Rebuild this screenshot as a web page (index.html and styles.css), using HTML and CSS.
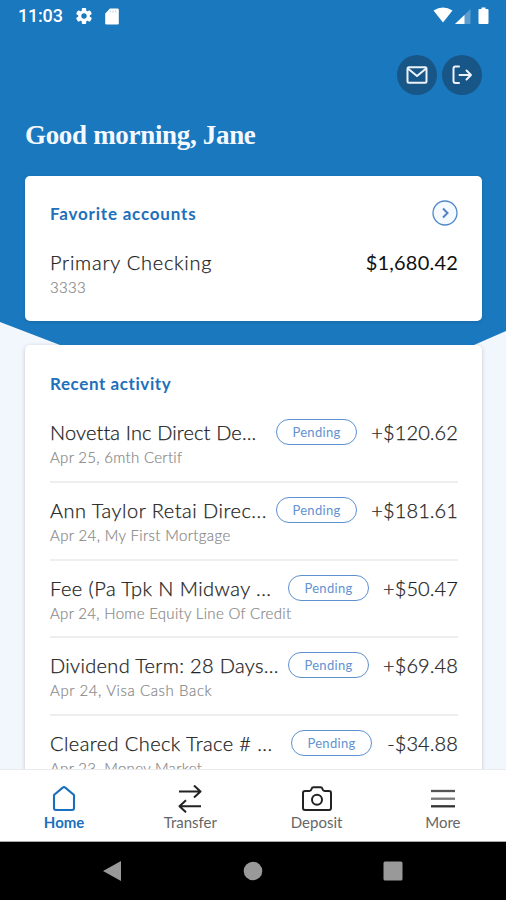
FILE: index.html
```html
<!DOCTYPE html>
<html lang="en">
<head>
<meta charset="utf-8">
<title>Accounts</title>
<link rel="stylesheet" href="styles.css">
</head>
<body>
<div class="phone">
  <main class="screen">
    <header class="hero">
      <div class="status">
        <span class="clock">11:03</span>
        <svg class="gear" width="16" height="16" viewBox="0 0 16 16"><g fill="#fff"><rect x="5.8" y="0" width="4.4" height="16" rx="1"/><rect x="5.8" y="0" width="4.4" height="16" rx="1" transform="rotate(60 8 8)"/><rect x="5.8" y="0" width="4.4" height="16" rx="1" transform="rotate(120 8 8)"/><circle cx="8" cy="8" r="5.8"/></g><circle cx="8" cy="8" r="2.7" fill="#1a78be"/></svg>
        <svg class="sd" width="14" height="17" viewBox="0 0 14 17"><path d="M5 .5h7.5q1.3 0 1.3 1.3v13.4q0 1.3-1.3 1.3h-11Q.2 16.500.2 15.200V5.500z" fill="#fff"/><path d="M5.300 2.500v2M8 2.500v2M10.700 2.500v2" stroke="#b5d2e8"/></svg>
        <svg class="signals" width="58" height="18" viewBox="0 0 58 18"><path d="M.5 3.500Q10 -2.500 19.500 3.500L10 15.500z" fill="#fff"/><path d="M22 17 37.500 2v15z" fill="#5b9dce"/><path d="M22 17 31.500 8v9z" fill="#fff"/><path d="M48.500.500h4v1.500h2q1 0 1 1v13q0 1-1 1h-8q-1 0-1-1V3q0-1 1-1h2z" fill="#fff"/></svg>
      </div>
      <div class="actions">
        <span class="round"><svg width="24" height="24" viewBox="0 0 24 24" fill="none" stroke="#eef2fa" stroke-width="2" stroke-linejoin="round" stroke-linecap="round"><rect x="2.500" y="4.200" width="19" height="15.600" rx="1.500"/><path d="M3.500 6l8.500 7 8.500-7"/></svg></span>
        <span class="round"><svg width="24" height="24" viewBox="0 0 24 24" fill="none" stroke="#eef2fa" stroke-width="2" stroke-linejoin="round" stroke-linecap="round"><path d="M9 3.500H5.500q-2 0-2 2v12.500q0 2 2 2H9M9.500 12H21M16.500 7.500 21 12l-4.500 4.500"/></svg></span>
      </div>
      <h1>Good morning, Jane</h1>
      <section class="card favorites">
        <div class="card-head"><h2 class="fav">Favorite accounts</h2>
          <svg width="26" height="26" viewBox="0 0 26 26" fill="none"><circle cx="13" cy="13" r="12" fill="#f4faff" stroke="#5088ca" stroke-width="1.300"/><path d="M11 8.500l4.500 4.500-4.500 4.500" stroke="#5480c4" stroke-width="2"/></svg>
        </div>
        <div class="line"><span class="name checking">Primary Checking</span><span class="total">$1,680.42</span></div>
        <div class="sub digits">3333</div>
      </section>
    </header>
    <section class="card activity">
      <h2 class="recent">Recent activity</h2>
      <div class="row"><div class="line"><span class="name n1">Novetta Inc Direct De...</span><span class="pill">Pending</span><span class="amount">+$120.62</span></div><div class="sub s1">Apr 25, 6mth Certif</div></div>
      <div class="row"><div class="line"><span class="name n2">Ann Taylor Retai Direc...</span><span class="pill">Pending</span><span class="amount">+$181.61</span></div><div class="sub s2">Apr 24, My First Mortgage</div></div>
      <div class="row"><div class="line"><span class="name n3">Fee (Pa Tpk N Midway ...</span><span class="pill">Pending</span><span class="amount short">+$50.47</span></div><div class="sub s3">Apr 24, Home Equity Line Of Credit</div></div>
      <div class="row"><div class="line"><span class="name n4">Dividend Term: 28 Days...</span><span class="pill">Pending</span><span class="amount short">+$69.48</span></div><div class="sub s4">Apr 24, Visa Cash Back</div></div>
      <div class="row"><div class="line"><span class="name n5">Cleared Check Trace # ...</span><span class="pill">Pending</span><span class="amount minus">-$34.88</span></div><div class="sub s5">Apr 23, Money Market</div></div>
    </section>
  </main>
  <nav class="tabs">
    <div class="tab active"><svg width="32" height="28" viewBox="0 0 32 28" fill="none" stroke="#1a70bd" stroke-width="2.100" stroke-linejoin="round"><path d="M6 10 14.700 2.600q1.300-1 2.600 0L26 10v13q0 2-2 2H8q-2 0-2-2z"/></svg><span>Home</span></div>
    <div class="tab"><svg width="32" height="28" viewBox="0 0 32 28" fill="none" stroke="#222" stroke-width="2" stroke-linejoin="round"><path d="M5 6.500h21M20 .500l6.500 6-6.500 6M27 21.300H6M12 15.300l-6.500 6 6.500 6"/></svg><span>Transfer</span></div>
    <div class="tab deposit"><svg width="32" height="28" viewBox="0 0 32 28" fill="none" stroke="#222" stroke-width="2" stroke-linejoin="round"><path d="M4 6h4.500q1.500 0 2-2 .5-1.700 2-1.700h7q1.500 0 2 1.700.5 2 2 2H28q2 0 2 2v15q0 2-2 2H4q-2 0-2-2V8q0-2 2-2z"/><circle cx="16" cy="14.700" r="5"/></svg><span>Deposit</span></div>
    <div class="tab more"><svg width="32" height="28" viewBox="0 0 32 28" fill="none" stroke-width="2.300"><path d="M4 6h24" stroke="#555"/><path d="M4 13.700h24" stroke="#777"/><path d="M4 21.300h24" stroke="#333"/></svg><span>More</span></div>
  </nav>
  <footer class="system">
    <svg width="20" height="22" viewBox="0 0 20 22"><path d="M1 11 19 1v20z" fill="#999"/></svg>
    <svg width="20" height="20" viewBox="0 0 20 20"><circle cx="10" cy="10" r="9.300" fill="#999"/></svg>
    <svg width="20" height="20" viewBox="0 0 20 20"><rect x=".5" y=".5" width="19" height="19" rx="1.500" fill="#999"/></svg>
  </footer>
</div>
</body>
</html>
```
FILE: styles.css
```css
* { box-sizing: border-box; }
body { margin: 0; font-family: Lato, "Open Sans", sans-serif; }
.phone { width: 506px; height: 900px; display: flex; flex-direction: column; overflow: hidden; background: #000; }
.screen { height: 769px; overflow: hidden; background: #f2f7fd; }
.hero { height: 345px; padding: 0 24px 0 25px; background: #1a78be; clip-path: polygon(0 0, 100% 0, 100% 331px, 474px 100%, 60px 100%, 0 322px); }
.status { height: 32px; margin: 0 -10px 0 -7px; display: flex; align-items: center; }
.clock { width: 58px; color: #fff; font: 500 18px/32px Roboto, sans-serif; letter-spacing: -.2px; }
.sd { margin-left: 13px; }
.signals { margin-left: auto; margin-right: 1px; }
.actions { display: flex; justify-content: flex-end; gap: 5px; padding-top: 23px; }
.round { width: 40px; height: 40px; border-radius: 50%; background: #175687; display: grid; place-items: center; }
h1 { margin: 22px 0 24px; height: 36px; color: #f4f8ff; font: bold 27px/36px "Liberation Serif", serif; letter-spacing: -.32px; white-space: nowrap; }
.card { background: #fff; padding: 0 24px 0 25px; }
.favorites { height: 145px; border-radius: 5px; padding-top: 24px; margin-top: -1px; box-shadow: 0 1px 3px #15548566; }
.card-head { display: flex; justify-content: space-between; height: 26px; align-items: center; }
h2 { margin: 0; color: #1e70bb; font-size: 17px; line-height: 26px; font-weight: bold; letter-spacing: .58px; }
.fav { letter-spacing: .8px; padding-top: 2px; }
.line { display: flex; align-items: center; height: 28px; white-space: nowrap; color: #222; font-size: 20px; font-weight: 300; -webkit-text-stroke: .25px; }
.name { flex: 1; min-width: 0; letter-spacing: .5px; }
.checking { letter-spacing: .75px; }
.n1 { letter-spacing: .13px; }
.n3 { letter-spacing: .46px; }
.n4 { letter-spacing: .33px; }
.n5 { letter-spacing: .42px; }
.favorites .line { margin-top: 22px; }
.total { color: #111; letter-spacing: .2px; font-weight: 400; -webkit-text-stroke: 0; }
.sub { color: #888; font-size: 15px; line-height: 22px; letter-spacing: .3px; font-weight: 300; -webkit-text-stroke: .2px; }
.s2 { letter-spacing: .36px; }
.s4 { letter-spacing: .6px; }
.activity { margin: 0 24px 0 25px; height: 500px; padding-top: 26px; border-radius: 5px; box-shadow: 0 1px 4px #0003; }
.recent { height: 34px; }
.row { height: 77.8px; padding-top: 13px; border-bottom: 2px solid #eee; }
.pill { width: 81px; height: 26px; border: 1.500px solid #5d90d0; border-radius: 13px; color: #6292d1; font-size: 13px; font-weight: 400; line-height: 25px; text-align: center; letter-spacing: .3px; -webkit-text-stroke: 0; }
.amount { width: 101px; text-align: right; letter-spacing: .1px; }
.short { width: 89px; }
.minus { width: 86px; }
.tabs { height: 73px; background: #fff; border-top: 1px solid #e8eaec; display: flex; border-bottom: 1px solid #aaa; padding-left: 1px; }
.tab { flex: 1; display: flex; flex-direction: column; align-items: center; padding-top: 15px; color: #666; font-size: 15px; line-height: 18px; }
.active { color: #1a70bd; font-weight: bold; }
.system { height: 58px; background: #000; display: flex; justify-content: space-between; align-items: center; padding: 0 103px 0 102px; }
```
